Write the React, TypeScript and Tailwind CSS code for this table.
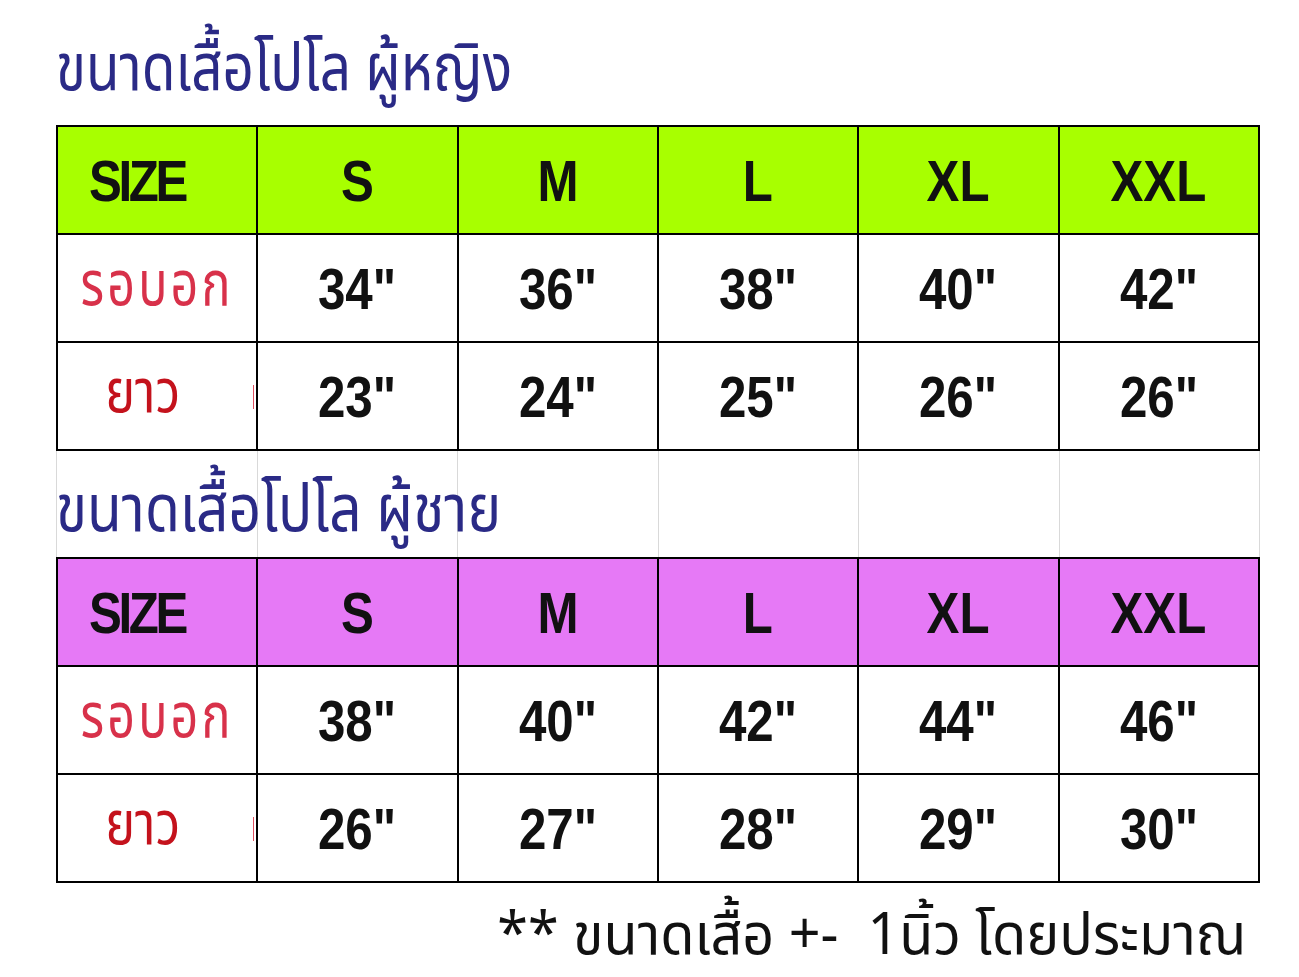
const sizes = ['S', 'M', 'L', 'XL', 'XXL'];

type Chart = {
  title: string;
  headerBg: string;
  chest: string[];
  length: string[];
};

const women: Chart = {
  title: 'ขนาดเสื้อโปโล ผู้หญิง',
  headerBg: 'bg-[#a8ff00]',
  chest: ['34"', '36"', '38"', '40"', '42"'],
  length: ['23"', '24"', '25"', '26"', '26"'],
};

const men: Chart = {
  title: 'ขนาดเสื้อโปโล ผู้ชาย',
  headerBg: 'bg-[#e679f6]',
  chest: ['38"', '40"', '42"', '44"', '46"'],
  length: ['26"', '27"', '28"', '29"', '30"'],
};

// no narrow face installed, so squeeze Liberation Sans Bold horizontally
const numFont = "font-['Liberation_Sans','Arial',sans-serif] font-bold text-[58px] text-[#111] inline-block scale-x-[0.85]";
const thaiFont = "font-['Noto_Sans_Thai','Noto_Sans','DejaVu_Sans',sans-serif]";

function Cell({ children, className = '' }: { children?: React.ReactNode; className?: string }) {
  return (
    <div className={`h-[108px] flex items-center justify-center border-black border-r-2 border-b-2 ${className}`}>
      {children}
    </div>
  );
}

function SizeTable({ chart }: { chart: Chart }) {
  return (
    <div className="grid grid-cols-6 w-[1204px] border-t-2 border-l-2 border-black">
      {/* header row */}
      <Cell className={`${chart.headerBg} justify-start pl-[31px]`}>
        <span className={`${numFont} tracking-[-4px] origin-left`}>SIZE</span>
      </Cell>
      {sizes.map((s) => (
        <Cell key={s} className={chart.headerBg}>
          <span className={numFont}>{s}</span>
        </Cell>
      ))}

      {/* chest */}
      <Cell className="bg-white">
        <span className={`${thaiFont} inline-block text-[62px] leading-none text-[#d8314a] tracking-[4px] scale-x-[0.78] -mt-1`}>
          รอบอก
        </span>
      </Cell>
      {chart.chest.map((v, i) => (
        <Cell key={i} className="bg-white">
          <span className={numFont}>{v}</span>
        </Cell>
      ))}

      {/* length */}
      <Cell className="bg-white relative">
        <span className={`${thaiFont} inline-block text-[60px] leading-none text-[#c4121c] scale-x-[0.84] -ml-7 -mt-1`}>ยาว</span>
        <span className="absolute right-[2px] top-[42px] w-[1px] h-[24px] bg-[#e05060]" />
      </Cell>
      {chart.length.map((v, i) => (
        <Cell key={i} className="bg-white">
          <span className={numFont}>{v}</span>
        </Cell>
      ))}
    </div>
  );
}

export default function App() {
  return (
    <div className="w-[1299px] h-[977px] bg-white overflow-hidden">
      <div className="pl-[56px] pt-[35px]">
        <h1 className="h-[90px]">
          <span className={`${thaiFont} inline-block origin-left scale-x-[0.83] text-[66px] leading-[70px] text-[#2a2a86]`}>
            {women.title}
          </span>
        </h1>
        <SizeTable chart={women} />

        {/* faint spreadsheet gridlines between the two charts */}
        <div className="relative w-[1204px]">
          <div className="grid grid-cols-6 h-[106px] border-l border-[#d9d9d9]">
            {sizes.concat(['']).map((_, i) => (
              <div key={i} className="border-r border-[#d9d9d9]" />
            ))}
          </div>
          <h2 className={`absolute left-0 top-[20px] ${thaiFont} inline-block origin-left scale-x-[0.86] text-[66px] leading-[80px] text-[#2a2a86] whitespace-nowrap`}>
            {men.title}
          </h2>
        </div>

        <SizeTable chart={men} />

        <div className="w-[1204px] flex justify-end pr-[14px] mt-[15px]">
          <p className={`${thaiFont} origin-right scale-x-[0.96] text-[58px] leading-[76px] text-[#111] whitespace-nowrap`}>
            ** ขนาดเสื้อ +-{'\u00a0\u00a0'}1นิ้ว โดยประมาณ
          </p>
        </div>
      </div>
    </div>
  );
}
